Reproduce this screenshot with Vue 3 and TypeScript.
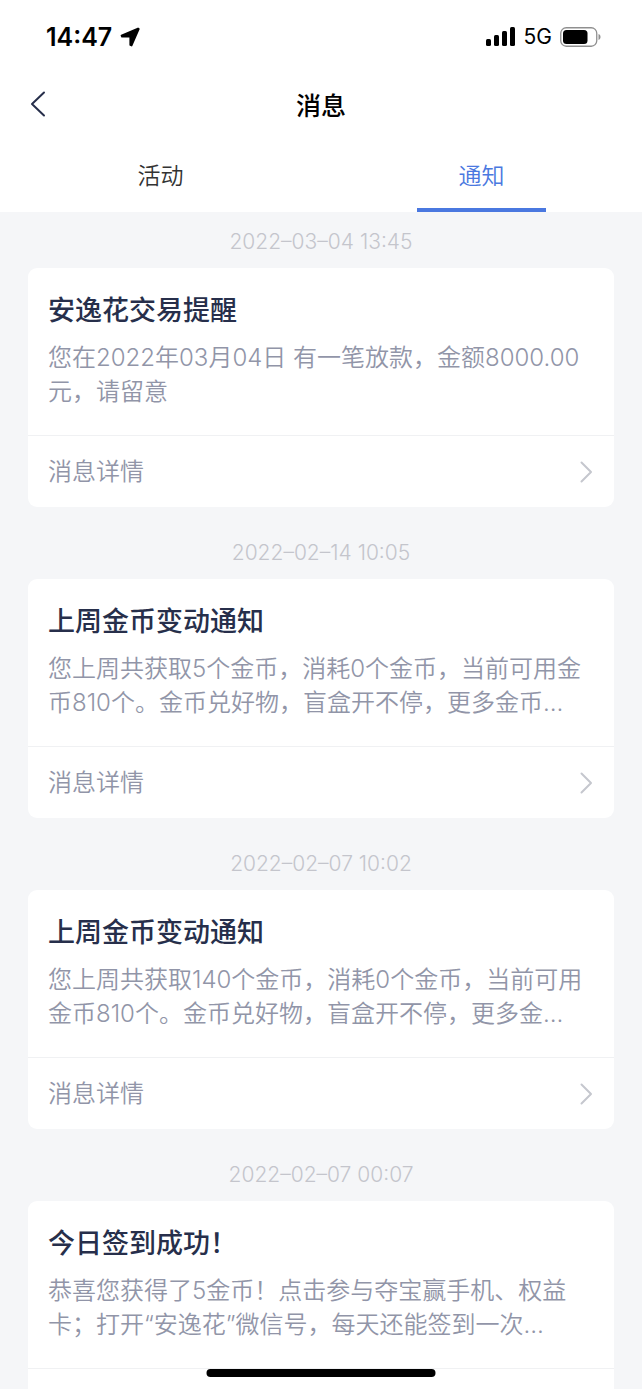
<script setup lang="ts">
import { ref } from 'vue'

interface Message {
  id: number
  time: string
  title: string
  body: string
}

const tabs = ['活动', '通知']
const activeTab = ref(1)

const messages: Message[] = [
  {
    id: 1,
    time: '2022–03–04 13:45',
    title: '安逸花交易提醒',
    body: '您在2022年03月04日 有一笔放款，金额8000.00元，请留意',
  },
  {
    id: 2,
    time: '2022–02–14 10:05',
    title: '上周金币变动通知',
    body: '您上周共获取5个金币，消耗0个金币，当前可用金币810个。金币兑好物，盲盒开不停，更多金币…',
  },
  {
    id: 3,
    time: '2022–02–07 10:02',
    title: '上周金币变动通知',
    body: '您上周共获取140个金币，消耗0个金币，当前可用金币810个。金币兑好物，盲盒开不停，更多金…',
  },
  {
    id: 4,
    time: '2022–02–07 00:07',
    title: '今日签到成功！',
    body: '恭喜您获得了5金币！点击参与夺宝赢手机、权益卡；打开“安逸花”微信号，每天还能签到一次…',
  },
]
</script>

<template>
  <div class="app">
    <header class="top">
      <div class="status">
        <div class="status-left">
          <span class="clock">14:47</span>
          <svg class="location" viewBox="0 0 20 20" aria-hidden="true">
            <path d="M18 1.500 1.500 8.500 2 9.700H10.300V18L11.600 18.500 18.800 2Z" fill="currentColor" stroke="currentColor" stroke-width="1.800" stroke-linejoin="round" />
          </svg>
        </div>
        <div class="status-right">
          <svg class="signal" viewBox="0 0 30 19" aria-hidden="true">
            <rect x="0" y="12" width="5" height="7" rx="1.500" />
            <rect x="8" y="8" width="5" height="11" rx="1.500" />
            <rect x="16" y="4" width="5" height="15" rx="1.500" />
            <rect x="24" y="0" width="5" height="19" rx="1.500" />
          </svg>
          <span class="network">5G</span>
          <svg class="battery" viewBox="0 0 41 20" aria-hidden="true">
            <rect x="0.750" y="0.750" width="36" height="18.500" rx="5.500" fill="none" stroke="#8f8f8f" stroke-width="1.300" />
            <rect x="3" y="3" width="24.500" height="14" rx="3.500" fill="#000" />
            <path d="M38.500 7v6c1.300-.4 2-1.600 2-3s-.7-2.600-2-3Z" fill="#8f8f8f" />
          </svg>
        </div>
      </div>

      <div class="nav">
        <button class="back" type="button" aria-label="返回">
          <svg viewBox="0 0 16 26" aria-hidden="true">
            <path d="M14 1.500 2 13l12 11.500" />
          </svg>
        </button>
        <h1 class="nav-title">消息</h1>
      </div>

      <div class="tabs" role="tablist">
        <button
          v-for="(tab, index) in tabs"
          :key="tab"
          class="tab"
          :class="{ active: index === activeTab }"
          type="button"
          role="tab"
          :aria-selected="index === activeTab"
          @click="activeTab = index"
        >
          {{ tab }}
        </button>
      </div>
    </header>

    <main class="list">
      <section v-for="message in messages" :key="message.id" class="entry">
        <time class="time">{{ message.time }}</time>
        <article class="card">
          <div class="content">
            <h2 class="title">{{ message.title }}</h2>
            <p class="body">{{ message.body }}</p>
          </div>
          <a class="detail" href="#">
            <span>消息详情</span>
            <svg class="chevron" viewBox="0 0 13 22" aria-hidden="true">
              <path d="M1.500 1.500 11 11l-9.500 9.500" />
            </svg>
          </a>
        </article>
      </section>
    </main>

    <div class="home-bar"></div>
  </div>
</template>

<style>
body {
  margin: 0;
  background: #f5f6f8;
}
</style>

<style scoped>
.app {
  position: relative;
  display: flex;
  flex-direction: column;
  height: 100vh;
  overflow: hidden;
  background: #f5f6f8;
  font-family: Inter, 'Noto Sans CJK SC', sans-serif;
  font-weight: 350;
}

.top {
  flex: none;
  background: #fff;
}

.status {
  display: flex;
  align-items: center;
  justify-content: space-between;
  height: 73px;
  padding: 0 41px 0 46px;
  color: #000;
}

.status-left,
.status-right {
  display: flex;
  align-items: center;
  gap: 8px;
}

.clock {
  font-size: 25px;
  font-weight: 600;
}

.location {
  width: 20px;
  height: 20px;
}

.signal {
  width: 30px;
  height: 19px;
}

.network {
  font-size: 21px;
  font-weight: 400;
}

.battery {
  width: 41px;
  height: 20px;
}

.nav {
  display: grid;
  grid-template-columns: 72px 1fr 72px;
  align-items: center;
  height: 62px;
}

.back {
  display: flex;
  align-items: center;
  height: 62px;
  padding: 0 0 0 30px;
  border: 0;
  background: none;
}

.back svg {
  width: 16px;
  height: 26px;
  fill: none;
  stroke: #272f4b;
  stroke-width: 2;
  stroke-linecap: round;
  stroke-linejoin: round;
}

.nav-title {
  margin: 0;
  color: #000;
  font-size: 25px;
  font-weight: 500;
  text-align: center;
}

.tabs {
  display: grid;
  grid-template-columns: 1fr 1fr;
  height: 77px;
}

.tab {
  position: relative;
  display: flex;
  flex-direction: column;
  align-items: center;
  justify-content: center;
  padding: 4px 0 0;
  border: 0;
  background: none;
  color: #333;
  font: inherit;
  font-size: 23px;
  line-height: 34px;
}

.tab.active {
  color: #4a78e0;
}

.tab.active::after {
  position: absolute;
  bottom: 0;
  width: 40%;
  height: 4px;
  background: #4a78e0;
  content: '';
}

.list {
  flex: 1;
  min-height: 0;
  padding: 0 28px;
  overflow-y: auto;
  scrollbar-width: none;
}

.entry {
  padding-bottom: 16px;
}

.time {
  display: block;
  padding: 14px 0 10px;
  color: #c4c5cc;
  font-size: 21px;
  font-weight: 300;
  line-height: 32px;
  text-align: center;
}

.card {
  border-radius: 9px;
  background: #fff;
}

.content {
  padding: 21px 24px 26px 20px;
}

.title {
  margin: 0 0 8px;
  color: #272f4b;
  font-size: 27px;
  font-weight: 500;
  line-height: 44px;
}

.body {
  margin: 0;
  color: #9195a8;
  font-size: 24px;
  line-height: 34px;
}

.detail {
  display: flex;
  align-items: center;
  justify-content: space-between;
  height: 71px;
  padding: 0 21px 0 20px;
  border-top: 1px solid #f0f1f3;
  color: #9195a8;
  font-size: 24px;
  line-height: 28px;
  text-decoration: none;
}

.chevron {
  width: 13px;
  height: 22px;
  fill: none;
  stroke: #c5c7ce;
  stroke-width: 2;
  stroke-linecap: round;
  stroke-linejoin: round;
}

.home-bar {
  position: absolute;
  bottom: 12px;
  left: 50%;
  width: 229px;
  height: 8px;
  border-radius: 4px;
  background: #000;
  transform: translateX(-50%);
}
</style>
